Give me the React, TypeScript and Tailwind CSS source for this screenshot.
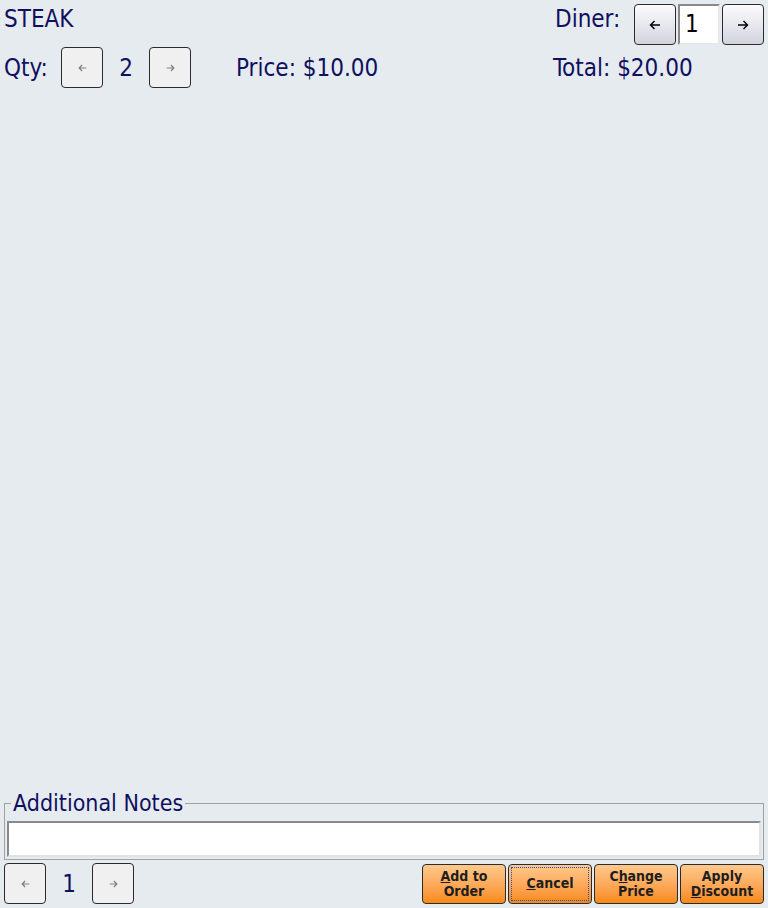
import React from 'react';

// piccola freccia per i pulsanti di navigazione
const Arrow = ({ dir, dark }: { dir: 'left' | 'right'; dark?: boolean }) => {
    const w = dark ? 12 : 9;
    const h = dark ? 10 : 8;
    return (
        <svg width={w} height={h} viewBox="0 0 12 10" className={dark ? 'text-black' : 'text-[#808080]'}>
            {dir === 'left' ? (
                <path d="M11 5 H1.5 M5.5 1 L1.5 5 L5.5 9" fill="none" stroke="currentColor" strokeWidth={dark ? 1.4 : 1.6} />
            ) : (
                <path d="M1 5 H10.5 M6.5 1 L10.5 5 L6.5 9" fill="none" stroke="currentColor" strokeWidth={dark ? 1.4 : 1.6} />
            )}
        </svg>
    );
};

const NavButton = ({ dir }: { dir: 'left' | 'right' }) => (
    <button className="w-[42px] h-[41px] flex items-center justify-center rounded-[4px] border border-[#2b2b2b] bg-[#f0f0f0]">
        <Arrow dir={dir} />
    </button>
);

const DinerButton = ({ dir }: { dir: 'left' | 'right' }) => (
    <button className="w-[42px] h-[41px] flex items-center justify-center rounded-[4px] border border-[#2b2b2b] bg-gradient-to-b from-[#fbfbfd] to-[#d3d3de]">
        <Arrow dir={dir} dark />
    </button>
);

const OrangeButton = ({ children, focused }: { children: React.ReactNode; focused?: boolean }) => (
    <button className="w-[84px] h-[40px] rounded-[4px] border border-[#2b2b2b] bg-gradient-to-b from-[#ffc98c] to-[#f88a10] p-[2px]">
        <div
            className={`w-full h-full flex items-center justify-center text-center text-[14px] leading-[15px] font-bold text-[#1e1e1e] ${
                focused ? 'border border-dotted border-[#2050c0]' : ''
            }`}
        >
            <span>{children}</span>
        </div>
    </button>
);

export default function App() {
    return (
        <div
            className="w-[768px] h-[908px] bg-[#e6ebf0] flex flex-col text-[#10105e] overflow-hidden font-stretch-condensed"
            style={{ fontFamily: '"DejaVu Sans Condensed", "DejaVu Sans", Verdana, sans-serif' }}
        >
            {/* riga 1: nome piatto + commensale */}
            <div className="flex items-start h-[41px] mt-[4px] pl-[4px] pr-[4px]">
                <div className="text-[24px] leading-[30px]">STEAK</div>
                <div className="ml-auto flex items-start">
                    <div className="text-[24px] leading-[30px] w-[79px]">Diner:</div>
                    <DinerButton dir="left" />
                    <div className="w-[42px] h-[41px] mx-[2px] bg-white border-2 border-t-[#8a8a8a] border-l-[#8a8a8a] border-r-[#e8e8e8] border-b-[#e8e8e8] text-black text-[24px] leading-[36px] pl-[5px]">
                        1
                    </div>
                    <DinerButton dir="right" />
                </div>
            </div>

            {/* riga 2: quantità, prezzo, totale */}
            <div className="flex items-center h-[41px] mt-[2px] pl-[4px] pr-[4px] text-[24px]">
                <div className="w-[57px]">Qty:</div>
                <NavButton dir="left" />
                <div className="w-[46px] text-center">2</div>
                <NavButton dir="right" />
                <div className="ml-[45px]">Price: $10.00</div>
                <div className="ml-auto w-[211px]">Total: $20.00</div>
            </div>

            <div className="flex-1" />

            {/* note aggiuntive */}
            <fieldset className="mx-[4px] border border-[#a0a0a0] px-[2px] pb-[2px] pt-0">
                <legend className="ml-[4px] px-[2px] text-[23px] leading-[24px]">Additional Notes</legend>
                <div className="h-[36px] mt-[6px] bg-white border-2 border-t-[#8a8a8a] border-l-[#8a8a8a] border-r-[#e2e2e2] border-b-[#e2e2e2]" />
            </fieldset>

            {/* barra inferiore */}
            <div className="flex items-center h-[41px] mt-[3px] mb-[4px] pl-[4px] pr-[4px]">
                <NavButton dir="left" />
                <div className="w-[46px] text-center text-[24px]">1</div>
                <NavButton dir="right" />
                <div className="ml-auto flex gap-[2px]">
                    <OrangeButton>
                        <u>A</u>dd to
                        <br />
                        Order
                    </OrangeButton>
                    <OrangeButton focused>
                        <u>C</u>ancel
                    </OrangeButton>
                    <OrangeButton>
                        C<u>h</u>ange
                        <br />
                        Price
                    </OrangeButton>
                    <OrangeButton>
                        Apply
                        <br />
                        <u>D</u>iscount
                    </OrangeButton>
                </div>
            </div>
        </div>
    );
}
